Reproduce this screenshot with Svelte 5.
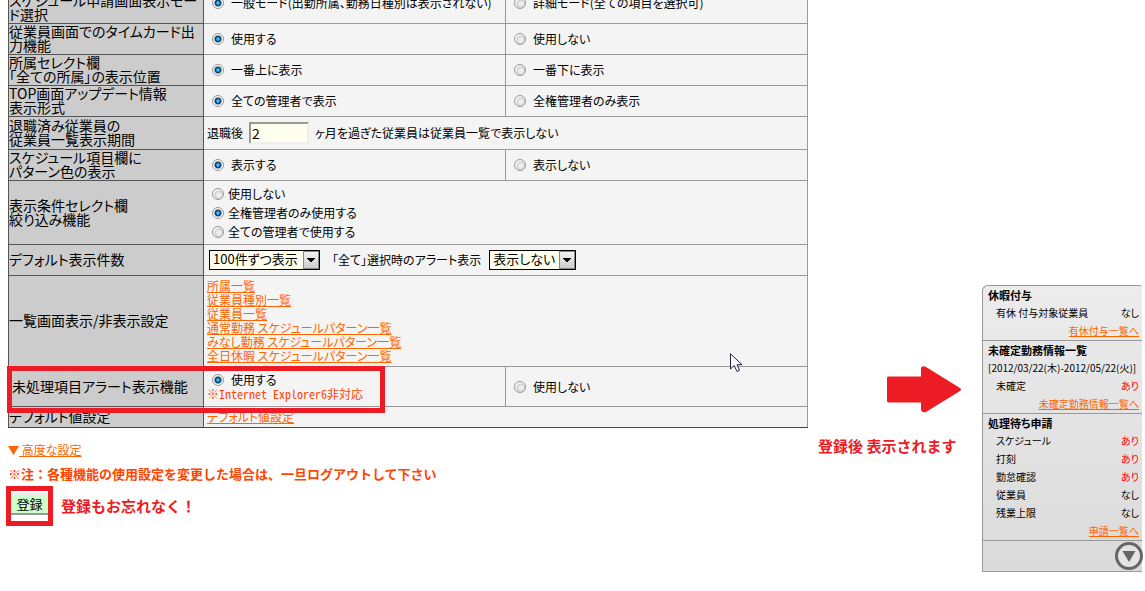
<script>
  const yesNo = [
    { label: ['スケジュール申請画面表示モード選択'], name: 'mode', a: '一般モード(出勤所属、勤務日種別は表示されない)', b: '詳細モード(全ての項目を選択可)' },
    { label: ['従業員画面でのタイムカード出力機能'], name: 'timecard', a: '使用する', b: '使用しない' },
    { label: ['所属セレクト欄', '「全ての所属」の表示位置'], name: 'position', a: '一番上に表示', b: '一番下に表示' },
    { label: ['TOP画面アップデート情報', '表示形式'], name: 'update', a: '全ての管理者で表示', b: '全権管理者のみ表示' }
  ];
  const filters = ['使用しない', '全権管理者のみ使用する', '全ての管理者で使用する'];
  const lists = ['所属一覧', '従業員種別一覧', '従業員一覧', '通常勤務 スケジュールパターン一覧', 'みなし勤務 スケジュールパターン一覧', '全日休暇 スケジュールパターン一覧'];
  const pending = [['スケジュール', 'あり'], ['打刻', 'あり'], ['勤怠確認', 'あり'], ['従業員', 'なし'], ['残業上限', 'なし']];
</script>

{#snippet choice(name, text, on)}
  <label class="choice"><input type="radio" {name} checked={on} /><span>{text}</span></label>
{/snippet}

{#snippet status(label, value)}
  <div class="status"><span>{label}</span><span class:alert={value === 'あり'}>{value}</span></div>
{/snippet}

<div class="page">
  <main>
    <div class="settings">
      <table>
        <colgroup><col class="head" /><col /><col /></colgroup>
        <tbody>
          {#each yesNo as row, i}
            <tr class:first={i === 0}>
              <th scope="row">{#each row.label as line}<div>{line}</div>{/each}</th>
              <td>{@render choice(row.name, row.a, true)}</td>
              <td>{@render choice(row.name, row.b, false)}</td>
            </tr>
          {/each}
          <tr class="period">
            <th scope="row"><div>退職済み従業員の</div><div>従業員一覧表示期間</div></th>
            <td colspan="2">
              <label class="line">退職後 <input class="months" type="text" value="2" /> ヶ月を過ぎた従業員は従業員一覧で表示しない</label>
            </td>
          </tr>
          <tr>
            <th scope="row"><div>スケジュール項目欄に</div><div>パターン色の表示</div></th>
            <td>{@render choice('color', '表示する', true)}</td>
            <td>{@render choice('color', '表示しない', false)}</td>
          </tr>
          <tr class="filter">
            <th scope="row"><div>表示条件セレクト欄</div><div>絞り込み機能</div></th>
            <td colspan="2">
              {#each filters as text, i}{@render choice('filter', text, i === 1)}{/each}
            </td>
          </tr>
          <tr>
            <th scope="row">デフォルト表示件数</th>
            <td colspan="2">
              <div class="line selects">
                <span class="select count"><select aria-label="デフォルト表示件数"><option>100件ずつ表示</option></select></span>
                <label for="all-alert">「全て」選択時のアラート表示</label>
                <span class="select"><select id="all-alert"><option>表示しない</option></select></span>
              </div>
            </td>
          </tr>
          <tr class="lists">
            <th scope="row">一覧画面表示/非表示設定</th>
            <td colspan="2">{#each lists as text}<div><a href="#list">{text}</a></div>{/each}</td>
          </tr>
          <tr class="pending">
            <th scope="row">未処理項目アラート表示機能</th>
            <td>{@render choice('alert', '使用する', true)}<p class="note">※Internet Explorer6非対応</p></td>
            <td>{@render choice('alert', '使用しない', false)}</td>
          </tr>
          <tr class="defaults">
            <th scope="row">デフォルト値設定</th>
            <td colspan="2"><a href="#defaults">デフォルト値設定</a></td>
          </tr>
        </tbody>
      </table>
      <div class="frame"></div>
    </div>
    <a class="advanced" href="#advanced"><svg width="11" height="9" viewBox="0 0 11 9"><path d="M0 0H11L5.5 9Z" fill="#f60" /></svg> 高度な設定</a>
    <p class="caution">※注：各種機能の使用設定を変更した場合は、一旦ログアウトして下さい</p>
    <div class="submit">
      <div class="ring"><button type="button">登録</button></div>
      <strong>登録もお忘れなく！</strong>
    </div>
  </main>

  <div class="callout">
    <svg width="75" height="47" viewBox="0 0 75 47"><path d="M1.500 10.500H34V2Q35 -1 39 1L73 22Q75 23.500 73 25L39 46Q35 47 34 44V36.500H1.500Q0 36 0 35V12Q0 10.500 1.500 10.500Z" fill="#ed1c24" /></svg>
    <strong>登録後 表示されます</strong>
  </div>

  <aside>
    <section>
      <h2>休暇付与</h2>
      {@render status('有休 付与対象従業員', 'なし')}
      <a href="#leave">有休付与一覧へ</a>
    </section>
    <section>
      <h2>未確定勤務情報一覧</h2>
      <p>[2012/03/22(木)-2012/05/22(火)]</p>
      {@render status('未確定', 'あり')}
      <a href="#unfixed">未確定勤務情報一覧へ</a>
    </section>
    <section>
      <h2>処理待ち申請</h2>
      {#each pending as [label, value]}{@render status(label, value)}{/each}
      <a href="#requests">申請一覧へ</a>
    </section>
    <footer>
      <button type="button" aria-label="閉じる">
        <svg width="30" height="30" viewBox="0 0 30 30"><circle cx="15" cy="15" r="12.500" fill="#e4e4e4" stroke="#666" stroke-width="3" /><path d="M8.500 10H21.500L15 21Z" fill="#666" /></svg>
      </button>
    </footer>
  </aside>

  <svg class="pointer" width="13" height="20" viewBox="0 0 13 20"><path d="M.5 .8V16L4.200 12.500L7 18.500L9.500 17.300L7 11.700H12Z" fill="#fff" stroke="#224" stroke-width="1" /></svg>
  <svg class="specks" width="503" height="19" viewBox="0 0 503 19"><path d="M422 .5H425M463 .5H469M476 .5H486M495 .5H502M0 18.500H11" stroke="#e6e6e6" /></svg>
</div>

<style>
  :global(body) { background: #fff; overflow: hidden; }
  .page {
    position: relative;
    display: flex;
    align-items: flex-start;
    padding: 0 3px 0 8px;
    font-family: "Noto Sans CJK JP", sans-serif;
    font-feature-settings: "palt";
    font-size: 12px;
    line-height: 14px;
    color: #000;
  }
  main { flex: 1; min-width: 0; }
  .settings { position: relative; margin-top: -19px; }
  table {
    width: 100%;
    table-layout: fixed;
    border-collapse: collapse;
    border: 1px solid #444;
    background: #f4f4f4;
  }
  .head { width: 195px; }
  tr { height: 31px; }
  th, td { padding: 0 2px 0 3px; border: 1px solid #999; text-align: left; vertical-align: middle; }
  th { padding: 0 1px 2px 0; background: #ccc; border-color: #555; font-size: 14px; font-weight: 400; }
  .first { height: 42px; }
  .first th { vertical-align: bottom; }
  .period { height: 33px; }
  .filter { height: 64px; }
  .lists { height: 91px; }
  .pending { height: 40px; }
  .pending th { padding-left: 3px; }
  .defaults { height: 21px; }
  tr:last-child th, tr:last-child td { border-bottom-color: #444; }
  a { color: #f60; text-decoration: underline; }
  p, h2 { margin: 0; }

  .choice { display: flex; align-items: center; gap: 7px; padding-left: 5px; }
  .filter .choice { gap: 4px; height: 19px; }
  input[type='radio'] {
    appearance: none;
    width: 12px;
    height: 12px;
    margin: 0;
    border: 1px solid #999;
    border-radius: 50%;
    background: radial-gradient(circle at 60% 60%, #eee 0 2px, #ccc 4px, #f6f6f6 5px);
  }
  input[type='radio']:checked { background: radial-gradient(circle, #4bf 0 1px, #0a6aa5 2px, #123a58 3px, #f4f4f4 4px); }
  .line { display: flex; align-items: center; gap: 6px; }
  .months {
    width: 60px;
    height: 22px;
    box-sizing: border-box;
    padding: 0 1px;
    border: 2px solid #eee;
    border-top-color: #999;
    border-left-color: #999;
    background: #ffffee;
    font: 14px "Noto Sans CJK JP", sans-serif;
  }
  .selects { gap: 8px; padding-left: 2px; }
  .select { position: relative; display: inline-flex; }
  .select::after {
    content: "";
    position: absolute;
    top: 1px;
    right: 1px;
    width: 16px;
    height: 18px;
    box-sizing: border-box;
    border: 1px solid #888;
    background:
      conic-gradient(from -45deg at 50% 100%, #000 90deg, transparent 0) 50% 50% / 8px 4px no-repeat,
      linear-gradient(#f2f2f2, #ccc);
    pointer-events: none;
  }
  select {
    appearance: none;
    width: 87px;
    height: 20px;
    padding: 0 3px 2px;
    border: 1px solid #000;
    border-radius: 0;
    background: #ffffee;
    color: #000;
    font: 13px/16px "Noto Sans CJK JP", sans-serif;
    font-feature-settings: "palt";
  }
  .count { margin-right: 4px; }
  .count select { width: 111px; }
  .note { color: #ff4500; font-feature-settings: "hwid"; }

  .frame {
    position: absolute;
    left: -1px;
    bottom: 15px;
    width: 378px;
    height: 47px;
    box-sizing: border-box;
    border: 5px solid #ed1c24;
  }
  .advanced { display: inline-block; margin-top: 15px; }
  .caution { margin-top: 10px; color: #ff4500; font-size: 13px; font-weight: 700; font-feature-settings: normal; }
  .submit { display: flex; align-items: center; gap: 8px; margin: 5px 0 0 -2px; }
  .ring { padding: 2px 0 6px; border: 5px solid #ed1c24; }
  .ring button {
    display: block;
    width: 37px;
    padding: 0;
    border: 0 solid #eee;
    border-width: 2px 0;
    border-bottom-color: #999;
    background: #cfc;
    font: 13px/18px "Noto Sans CJK JP", sans-serif;
  }
  strong { color: #ed1c24; font-size: 15px; line-height: 18px; white-space: nowrap; font-feature-settings: normal; }

  .callout { display: flex; flex-direction: column; gap: 24px; width: 164px; padding: 366px 0 0 10px; }
  .callout svg { margin-left: 69px; }

  aside {
    width: 160px;
    box-sizing: border-box;
    margin-top: 285px;
    border: 1px solid #999;
    border-right: 0;
    border-radius: 6px 2px 0 0;
    background: linear-gradient(#ececec, #dadada);
    font-size: 10px;
    line-height: 18px;
  }
  section { display: flex; flex-direction: column; padding: 0 3px 0 5px; border-bottom: 1px solid #999; }
  h2 { font-size: 11px; line-height: 18px; }
  section a { align-self: flex-end; }
  .status { display: flex; justify-content: space-between; padding-left: 8px; }
  .alert { color: #f00; }
  footer { display: flex; justify-content: flex-end; height: 30px; }
  footer button { margin-right: -2px; padding: 0; border: 0; background: none; line-height: 0; }

  .pointer { position: absolute; left: 730px; top: 353px; }
  .specks { position: absolute; left: 413px; top: 572px; }
</style>
